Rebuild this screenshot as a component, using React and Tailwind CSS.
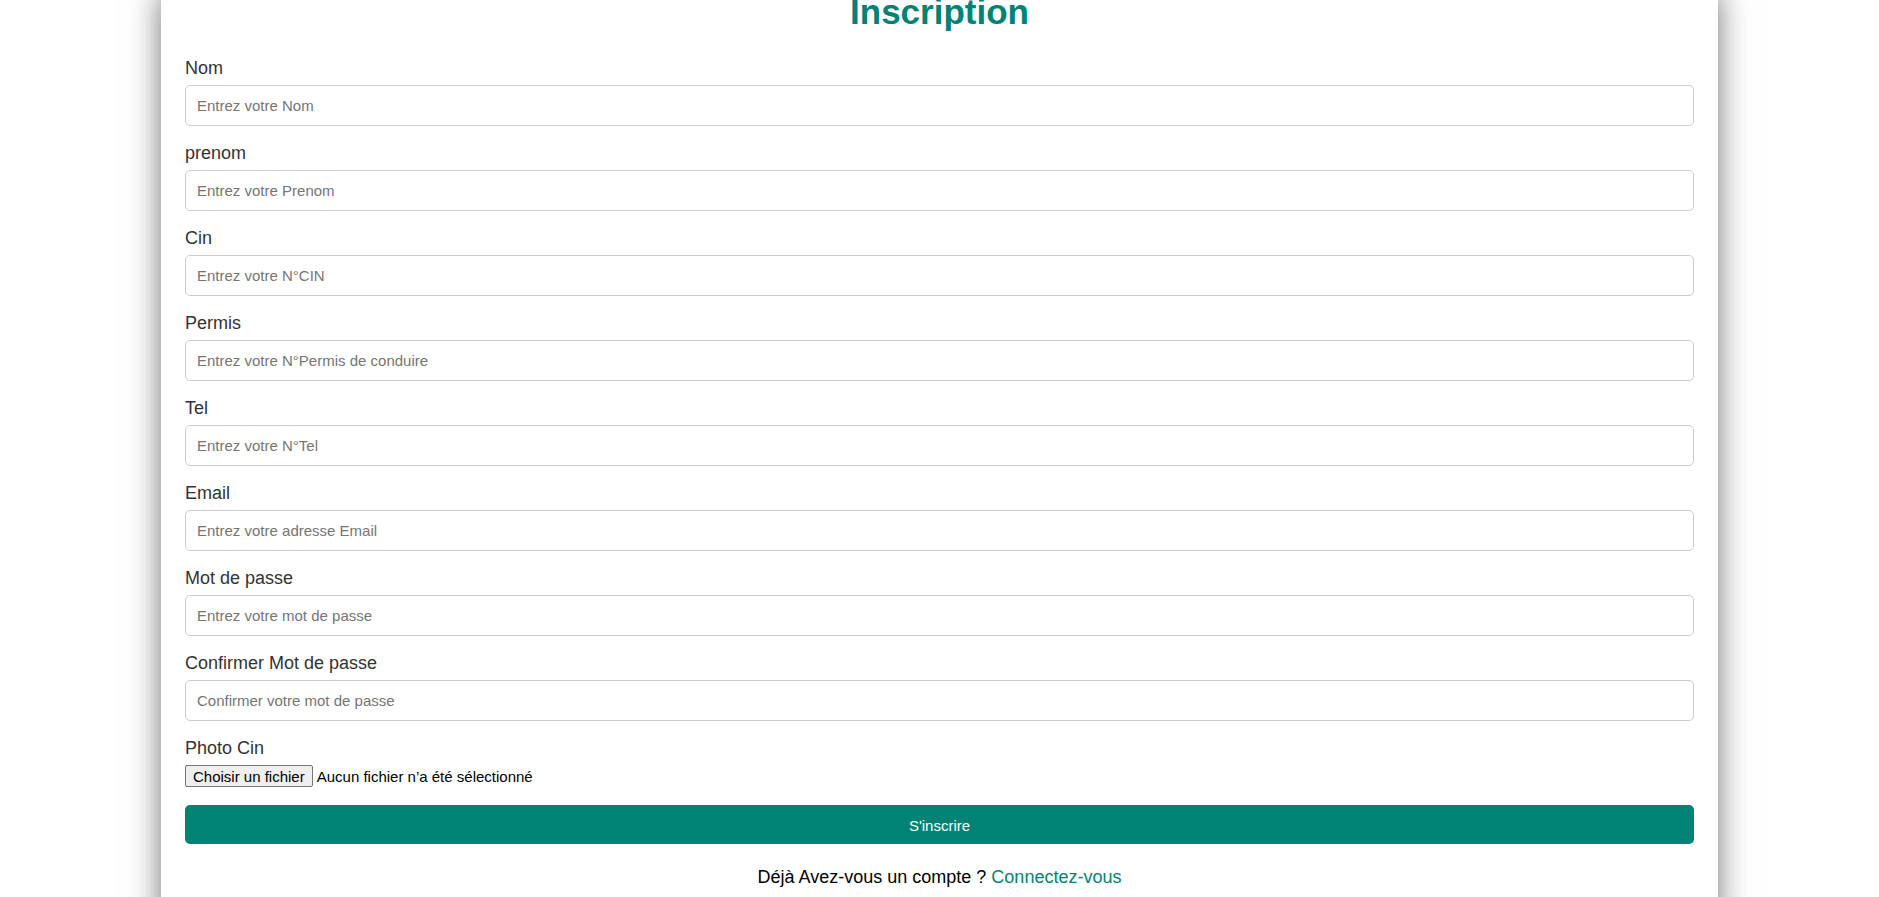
import React from "react";

const fields = [
  { label: "Nom", placeholder: "Entrez votre Nom", type: "text" },
  { label: "prenom", placeholder: "Entrez votre Prenom", type: "text" },
  { label: "Cin", placeholder: "Entrez votre N°CIN", type: "text" },
  { label: "Permis", placeholder: "Entrez votre N°Permis de conduire", type: "text" },
  { label: "Tel", placeholder: "Entrez votre N°Tel", type: "text" },
  { label: "Email", placeholder: "Entrez votre adresse Email", type: "email" },
  { label: "Mot de passe", placeholder: "Entrez votre mot de passe", type: "password" },
  { label: "Confirmer Mot de passe", placeholder: "Confirmer votre mot de passe", type: "password" },
];

export default function App() {
  return (
    <div
      className="min-h-screen w-full bg-white overflow-hidden"
      style={{ fontFamily: '"Liberation Sans", Arial, sans-serif' }}
    >
      <div className="ml-[161px] -mt-[8px] w-[1557px] bg-white px-[24px] pb-[40px] shadow-[0_0_30px_rgba(0,0,0,0.55)]">
        <h2 className="text-center text-[35px] font-bold leading-[39px] text-[#008374] mb-[27px]">
          Inscription
        </h2>
        <form className="flex flex-col" onSubmit={(e) => e.preventDefault()}>
          <div className="flex flex-col gap-[17px]">
            {fields.map((f) => (
              <div key={f.label} className="flex flex-col">
                <label className="block text-[18px] leading-[20px] text-[#333] mb-[7px]">
                  {f.label}
                </label>
                <input
                  type={f.type}
                  placeholder={f.placeholder}
                  className="h-[41px] w-full rounded-[5px] border border-[#ccc] bg-white px-[11px] text-[15px] text-[#333] outline-none placeholder:text-[#757575]"
                />
              </div>
            ))}
            <div className="flex flex-col">
              <label className="block text-[18px] leading-[20px] text-[#333] mb-[7px]">
                Photo Cin
              </label>
              <div className="flex h-[22px] items-center text-[15px] text-black">
                <span className="flex h-[22px] items-center rounded-[2px] border border-[#767676] bg-[#efefef] px-[7px] leading-[17px] text-black">
                  Choisir un fichier
                </span>
                <span className="ml-[4px] leading-[17px]">Aucun fichier n’a été sélectionné</span>
              </div>
            </div>
          </div>
          <button
            type="submit"
            className="mt-[18px] h-[39px] w-full rounded-[5px] bg-[#008374] text-[15px] leading-[17px] pt-[2px] text-white"
          >
            S'inscrire
          </button>
          <p className="mt-[23px] text-center text-[18px] leading-[20px] text-black">
            Déjà Avez-vous un compte ?{" "}
            <a href="#" className="text-[#008374]">
              Connectez-vous
            </a>
          </p>
        </form>
      </div>
    </div>
  );
}
